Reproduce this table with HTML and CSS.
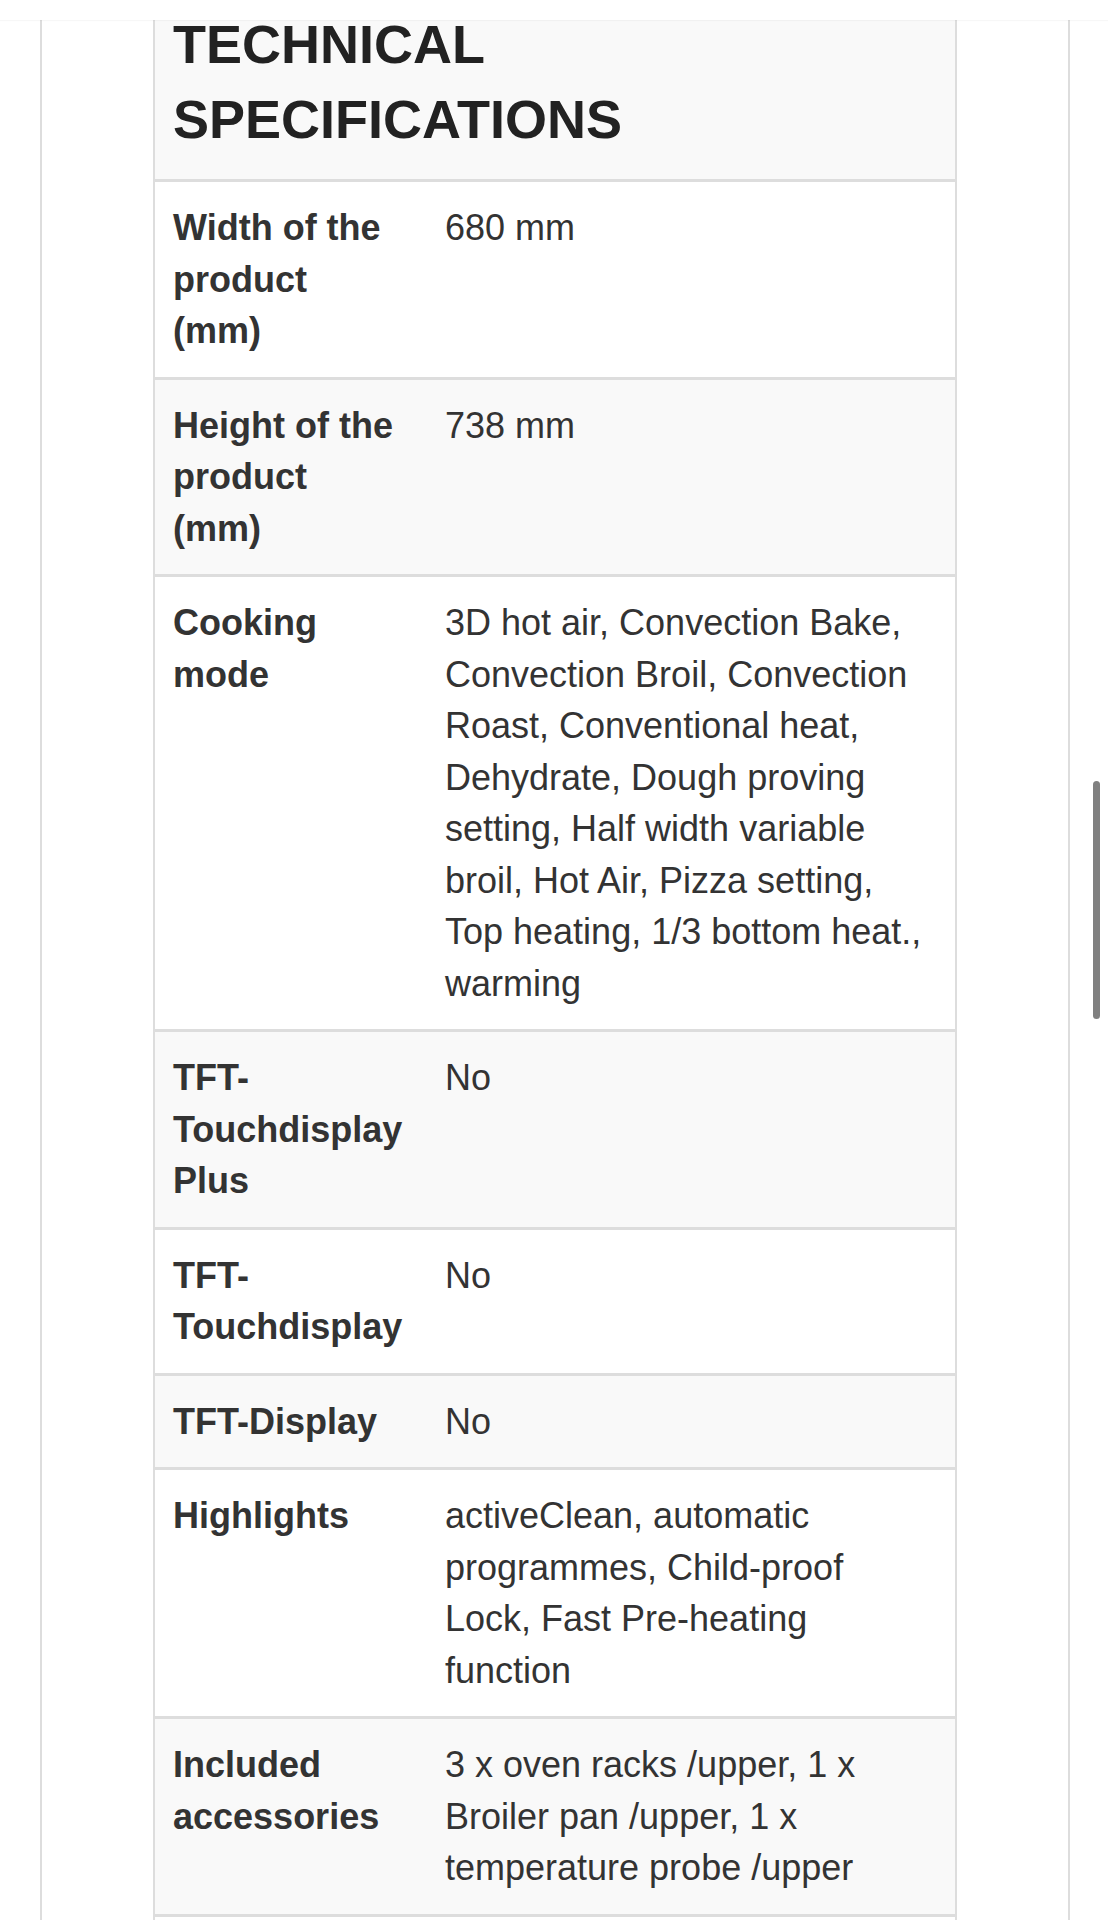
FILE: index.html
```html
<!DOCTYPE html>
<html lang="en">
<head>
<meta charset="utf-8">
<title>Technical specifications</title>
<link rel="stylesheet" href="styles.css">
</head>
<body>
<div class="topbar"></div>
<div class="scrollbar"></div>
<main class="page">
  <table class="specs">
    <colgroup>
      <col class="col-label">
      <col class="col-value">
    </colgroup>
    <thead>
      <tr>
        <th colspan="2" class="specs-head"><h2 class="specs-title">TECHNICAL SPECIFICATIONS</h2></th>
      </tr>
    </thead>
    <tbody>
      <tr><th class="label">Width of the product (mm)</th><td class="value">680 mm</td></tr>
      <tr><th class="label">Height of the product (mm)</th><td class="value">738 mm</td></tr>
      <tr><th class="label">Cooking mode</th><td class="value">3D hot air, Convection Bake, Convection Broil, Convection Roast, Conventional heat, Dehydrate, Dough proving setting, Half width variable broil, Hot Air, Pizza setting, Top heating, 1/3 bottom heat., warming</td></tr>
      <tr><th class="label">TFT-Touchdisplay Plus</th><td class="value">No</td></tr>
      <tr><th class="label">TFT-Touchdisplay</th><td class="value">No</td></tr>
      <tr><th class="label">TFT-Display</th><td class="value">No</td></tr>
      <tr><th class="label">Highlights</th><td class="value">activeClean, automatic programmes, Child-proof Lock, Fast Pre-heating function</td></tr>
      <tr><th class="label">Included accessories</th><td class="value">3 x oven racks /upper, 1 x Broiler pan /upper, 1 x temperature probe /upper</td></tr>
      <tr class="row-end"><th class="label"></th><td class="value"></td></tr>
    </tbody>
  </table>
</main>
</body>
</html>
```

FILE: styles.css
```css
html, body {
  margin: 0;
  padding: 0;
  background: #fff;
}

body {
  font-family: "Liberation Sans", Arial, Helvetica, sans-serif;
  color: #333;
  overflow: hidden;
}

.topbar {
  position: fixed;
  top: 0;
  left: 0;
  right: 0;
  height: 20px;
  background: #fff;
  box-shadow: 0 1px 1px rgba(0, 0, 0, 0.03);
  z-index: 2;
}

.scrollbar {
  position: fixed;
  left: 1093px;
  top: 781px;
  width: 7px;
  height: 238px;
  border-radius: 4px;
  background: #808080;
  z-index: 3;
}

.page {
  margin: 0 38px 0 40px;
  padding: 0 111px;
  border-left: 2px solid #ddd;
  border-right: 2px solid #ddd;
  min-height: 2100px;
}

.specs {
  width: 100%;
  table-layout: fixed;
  border-collapse: separate;
  border-spacing: 0;
  border-left: 2px solid #ddd;
  border-right: 2px solid #ddd;
  font-size: 36px;
  line-height: 51.5px;
}

.col-label {
  width: 272px;
}

.specs-head {
  background: #f9f9f9;
  text-align: left;
  padding: 7px 60px 22px 18px;
  border-bottom: 3px solid #ddd;
}

.specs-title {
  margin: 0;
  font-size: 54px;
  line-height: 75px;
  font-weight: bold;
  color: #222;
}

.label,
.value {
  vertical-align: top;
  text-align: left;
  border-bottom: 3px solid #ddd;
}

.label {
  font-weight: bold;
  padding: 20px 24px 20px 18px;
}

.value {
  font-weight: normal;
  padding: 20px 20px 20px 18px;
}

.row-end .label,
.row-end .value {
  height: 60px;
}

.specs tbody tr:nth-child(even) {
  background: #f9f9f9;
}
```
